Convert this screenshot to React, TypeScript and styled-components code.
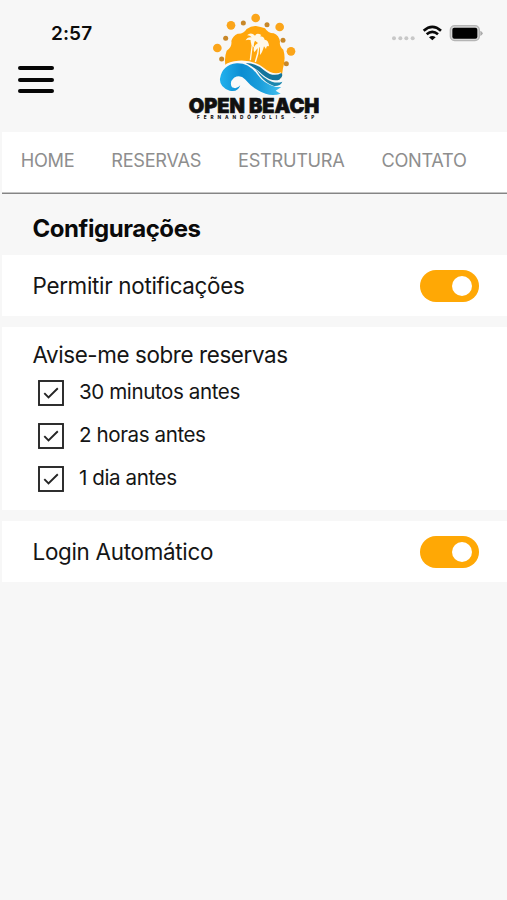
import React, { useState } from "react";
import styled, { createGlobalStyle } from "styled-components";

const GlobalStyle = createGlobalStyle`
  * { box-sizing: border-box; }
  body { margin: 0; background: #f7f7f7; }
`;

const Screen = styled.div`
  min-height: 900px;
  padding-left: 2px;
  background: #f7f7f7;
  color: #151515;
  font-family: Inter, "Liberation Sans", sans-serif;
  overflow: hidden;
`;

const Header = styled.header`
  height: 132px;
  display: grid;
  grid-template-columns: 178px 150px 1fr;
`;

const HeaderLeft = styled.div`
  display: flex;
  flex-direction: column;
  align-items: flex-start;
`;

const Clock = styled.time`
  margin: 21px 0 0 49px;
  font-size: 19px;
  line-height: 25px;
  font-weight: 600;
  letter-spacing: 0.1px;
  color: #0b0b0b;
`;

const MenuButton = styled.button`
  margin: 20px 0 0 16px;
  padding: 0;
  width: 36px;
  height: 27px;
  border: 0;
  background: none;
  display: flex;
  flex-direction: column;
  justify-content: space-between;
`;

const MenuBar = styled.span`
  height: 4px;
  width: 100%;
  border-radius: 2px;
  background: #060606;
`;

const LogoArt = styled.svg`
  display: block;
  margin-top: 5px;
`;

const StatusIcons = styled.svg`
  display: block;
  margin: 15px 0 0 50px;
`;

const Nav = styled.nav`
  height: 62px;
  padding: 16px 0 0 18.7px;
  display: flex;
  gap: 37px;
  background: #fff;
  border-bottom: 1px solid #858585;
  box-shadow: inset 0 -1px #c4c4c4;
`;

const NavLink = styled.a`
  font-size: 18.2px;
  line-height: 25px;
  letter-spacing: -0.3px;
  color: #8e8e8e;
  white-space: nowrap;
`;

const Title = styled.h1`
  margin: 0;
  height: 61px;
  padding: 19px 0 0 30.5px;
  font-size: 24px;
  line-height: 32px;
  font-weight: 700;
  letter-spacing: -0.44px;
  color: #0a0a0a;
`;

const Cards = styled.main`
  display: flex;
  flex-direction: column;
  gap: 11px;
`;

const Row = styled.section`
  height: 61px;
  padding: 0 28px 0 30.5px;
  display: flex;
  align-items: center;
  justify-content: space-between;
  background: #fff;
`;

const Group = styled.section`
  height: 183px;
  padding: 12px 30.5px 0;
  background: #fff;
`;

const Label = styled.span<{ $spacing: number }>`
  display: inline-block;
  font-size: 22.4px;
  line-height: 32px;
  letter-spacing: ${(p) => p.$spacing}px;
`;

const Toggle = styled.button<{ $on: boolean }>`
  width: 59px;
  height: 32px;
  padding: 0 7px;
  border: 0;
  border-radius: 16px;
  display: flex;
  align-items: center;
  justify-content: ${(p) => (p.$on ? "flex-end" : "flex-start")};
  background: ${(p) => (p.$on ? "#ffa805" : "#c9c9c9")};
`;

const Knob = styled.span`
  width: 20px;
  height: 20px;
  border-radius: 50%;
  background: #fff;
`;

const Option = styled.label`
  height: 43px;
  padding-left: 5.5px;
  display: flex;
  align-items: flex-start;
  gap: 15px;
`;

const Box = styled.svg`
  display: block;
  margin-top: 9px;
`;

const OptionText = styled.span`
  margin-top: 7px;
  font-size: 20.6px;
  line-height: 28px;
  letter-spacing: -0.42px;
`;

const suns = [[227, 39], [153, 61], [299, 66], [112, 129], [333, 139]];
const sparks = [[190, 54], [261, 59], [137, 100], [309, 106], [125, 162], [319, 176]];

const Logo = () => (
  <LogoArt width="150" height="125" viewBox="0 0 450 375" aria-label="Open Beach">
    <defs>
      <linearGradient id="sea" x1="0" x2="1">
        <stop offset="0" stopColor="#22b2ee" />
        <stop offset="0.35" stopColor="#0c8dd2" />
        <stop offset="0.65" stopColor="#1a9edb" />
        <stop offset="1" stopColor="#45c0ee" />
      </linearGradient>
    </defs>
    <path
      fill="#ffa60c"
      d="M138 192 Q131 160 140 137 Q157 127 154 108 Q158 93 173 86 Q191 87 200 72 Q214 62 228 63 Q242 66 255 70 Q264 85 281 85 Q297 91 300 110 Q297 124 310 134 Q318 160 309 190 L304 222 Q270 246 232 206 Q190 160 138 192Z"
    />
    {suns.map(([x, y]) => <circle key={x} cx={x} cy={y} r="13" fill="#fba51a" />)}
    {sparks.map(([x, y]) => <circle key={x} cx={x} cy={y} r="7.5" fill="#c88728" />)}
    <g fill="#fff8e8">
      <path d="M222 117 Q212 99 197 106 Q203 94 215 97 Q208 89 201 91 Q213 80 225 92 Q230 82 244 90 L240 94 Q251 94 254 104 Q266 105 267 124 Q259 120 258 132 L252 124 Q247 143 240 150 L240 126 Q230 130 223 142 Q216 124 234 114 L225 107 Q220 116 222 128 Q209 118 213 104Z" />
      <path d="M220 108 L213 166 L209 166 L216 112Z M239 121 Q237 148 228 172 L224 170 Q233 145 235 120Z" />
    </g>
    <path fill="#f9f9f9" d="M116 218 Q120 170 175 167 Q222 164 252 189 Q279 212 303 202 L308 240 L300 270 L240 262 L190 245 L150 262Z" />
    <path
      fill="url(#sea)"
      d="M149 257 Q118 246 120 221 Q126 180 170 175 Q204 173 231 207 Q253 238 288 246 L304 246 L287 257 Q297 263 302 266 Q270 278 234 256 Q212 244 195 223 Q181 207 162 218 Q147 231 156 247 Q170 254 181 241 Q173 263 149 257Z"
    />
    <path fill="#14759c" d="M197 174 Q228 174 254 197 Q280 218 304 204 Q312 213 298 224 Q274 231 248 209 Q224 187 197 174Z" />
    <path fill="#1c87ae" d="M225 190 Q251 222 276 230 Q292 235 307 230 Q301 244 282 243 Q258 236 239 211Z" />
    <text fontFamily="Inter, sans-serif" fill="#101010">
      <tspan x="26" y="323" textLength="392" lengthAdjust="spacingAndGlyphs" fontWeight="900" fontSize="61" stroke="#101010" strokeWidth="2">OPEN BEACH</tspan>
      <tspan x="51" y="343" fontWeight="800" fontSize="14" letterSpacing="11.8">FERNANDÓPOLIS - SP</tspan>
    </text>
  </LogoArt>
);

const Status = () => (
  <StatusIcons width="127" height="40" viewBox="0 0 381 120">
    {[42, 61, 79, 98].map((x) => <circle key={x} cx={x} cy="70" r="6" fill="#c8c8c8" />)}
    <g fill="none" stroke="#090909" strokeWidth="8">
      <path d="M131 47 Q157 24 183 47" />
      <path d="M140 58 Q157 43 174 58" />
    </g>
    <path d="M147 67 Q157 59 167 67 L157 76Z" fill="#090909" />
    <rect x="211" y="32" width="87" height="45" rx="13" fill="#d4d4d4" stroke="#b5b5b5" strokeWidth="4" />
    <rect x="217" y="38" width="75" height="33" rx="6" fill="#000" />
    <path d="M301 47 Q308 50 308 55 Q308 60 301 63Z" fill="#aaa" />
  </StatusIcons>
);

const CheckIcon = () => (
  <Box width="26" height="26" viewBox="0 0 26 26">
    <rect x="1" y="1" width="24" height="24" fill="#fff" stroke="#252525" strokeWidth="1.9" />
    <path d="M6.3 13.2 L10.5 17.4 L19.8 8.2" fill="none" stroke="#252525" strokeWidth="1.9" />
  </Box>
);

const Switch = () => {
  const [on, setOn] = useState(true);
  return (
    <Toggle $on={on} role="switch" aria-checked={on} onClick={() => setOn(!on)}>
      <Knob />
    </Toggle>
  );
};

const links = ["HOME", "RESERVAS", "ESTRUTURA", "CONTATO"];
const options = ["30 minutos antes", "2 horas antes", "1 dia antes"];

export default function App() {
  return (
    <>
      <GlobalStyle />
      <Screen>
        <Header>
          <HeaderLeft>
            <Clock>2:57</Clock>
            <MenuButton aria-label="Menu">
              <MenuBar /><MenuBar /><MenuBar />
            </MenuButton>
          </HeaderLeft>
          <Logo />
          <Status />
        </Header>
        <Nav>
          {links.map((text) => <NavLink key={text}>{text}</NavLink>)}
        </Nav>
        <Title>Configurações</Title>
        <Cards>
          <Row><Label $spacing={-0.3}>Permitir notificações</Label><Switch /></Row>
          <Group>
            <Label $spacing={-0.39}>Avise-me sobre reservas</Label>
            {options.map((text) => (
              <Option key={text}>
                <CheckIcon />
                <OptionText>{text}</OptionText>
              </Option>
            ))}
          </Group>
          <Row><Label $spacing={-0.28}>Login Automático</Label><Switch /></Row>
        </Cards>
      </Screen>
    </>
  );
}
